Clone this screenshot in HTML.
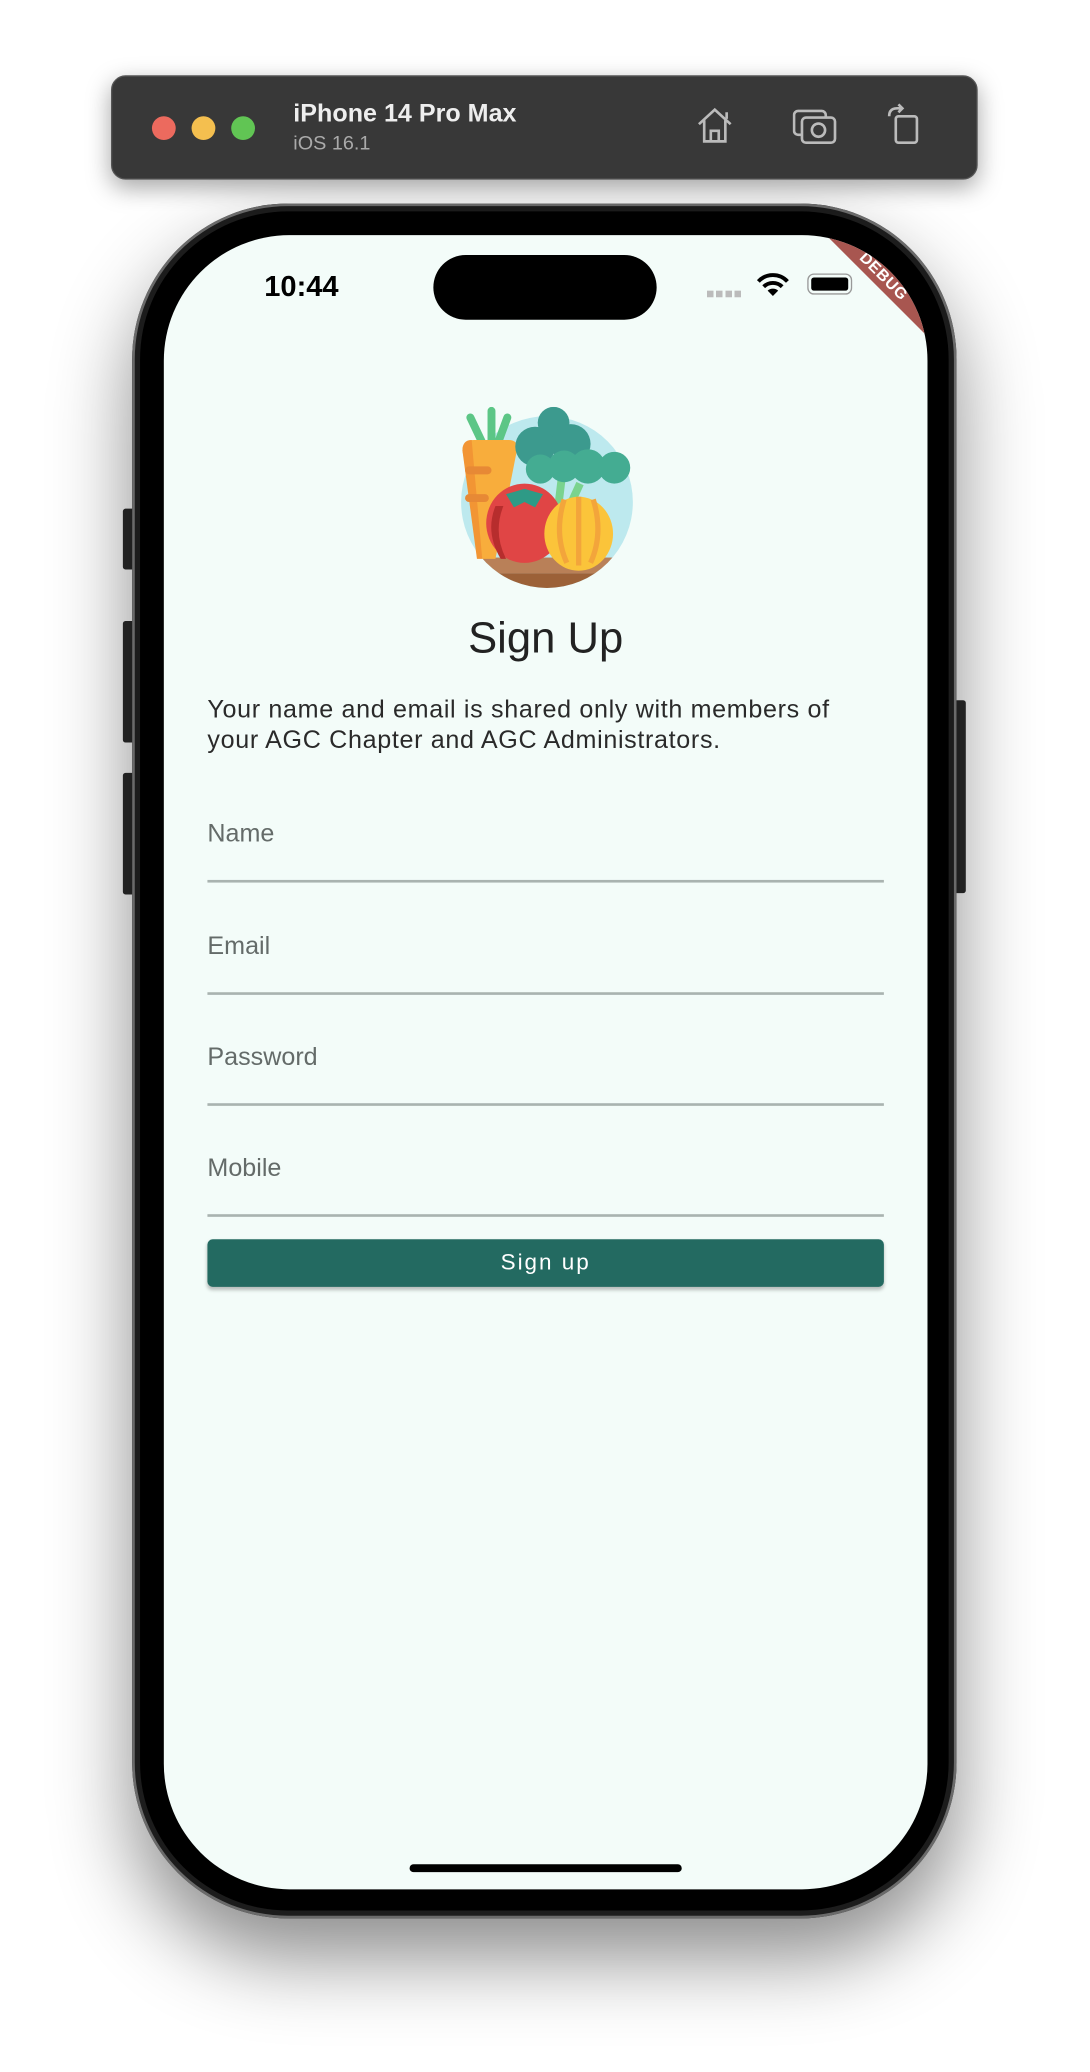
<!DOCTYPE html>
<html><head><meta charset="utf-8"><style>
html,body{margin:0;padding:0;background:#fff;width:1090px;height:2072px;overflow:hidden}
#w{position:absolute;left:0;top:0;width:825px;height:1568px;transform:scale(1.32121);transform-origin:0 0;font-family:"Liberation Sans",sans-serif}
.abs{position:absolute}
.bar{left:84px;top:57px;width:656px;height:79px;background:#383838;border-radius:11px;box-shadow:0 6px 18px rgba(0,0,0,.35);border:1px solid #555;box-sizing:border-box}
.dot{width:18px;height:18px;border-radius:50%;top:88px}
.phone{left:100px;top:154px;width:624px;height:1298px;border-radius:118px;background:#1c1c1c;box-shadow:0 30px 60px rgba(0,0,0,.45),0 0 0 2px #6a6a6a inset;}
.bezel{left:106px;top:160px;width:612px;height:1286px;border-radius:112px;background:#000}
.screen{left:124px;top:178px;width:578px;height:1252px;border-radius:95px;background:#f3fcf9;overflow:hidden}
.btn{background:#2a2a2a;border-radius:2px}
.lbl{left:33px;font-size:19px;color:#646b69}
.line{left:33px;width:512px;height:2px;background:#a9b3b0}
</style></head><body><div id="w">
<div class="abs btn" style="left:93px;top:385px;width:9px;height:46px"></div>
<div class="abs btn" style="left:93px;top:470px;width:9px;height:92px"></div>
<div class="abs btn" style="left:93px;top:585px;width:9px;height:92px"></div>
<div class="abs btn" style="left:722px;top:530px;width:9px;height:146px"></div>
<div class="abs phone"></div>
<div class="abs bezel"></div>
<div class="abs screen">
  <div class="abs" style="left:76px;top:26px;font-size:22px;font-weight:bold;color:#000">10:44</div>
  <div class="abs" style="left:204px;top:15px;width:169px;height:49px;border-radius:25px;background:#000"></div>
  <div class="abs" style="left:411px;top:42px;width:27px;height:5px;background:repeating-linear-gradient(90deg,#bbb 0 5px,transparent 5px 7px)"></div>
  <svg class="abs" style="left:448px;top:27px" width="26" height="20" viewBox="0 0 26 20"><path d="M13 19 L9 15 A6 6 0 0 1 17 15 Z" fill="#000"/><path d="M6 12 A10 10 0 0 1 20 12" stroke="#000" stroke-width="3" fill="none"/><path d="M2 8 A15 15 0 0 1 24 8" stroke="#000" stroke-width="3" fill="none"/></svg>
  <div class="abs" style="left:487px;top:29px;width:34px;height:16px;border:1.5px solid #999;border-radius:5px;box-sizing:border-box;padding:2px"><div style="background:#000;height:100%;border-radius:2px"></div></div>
  <div class="abs" style="left:475px;top:22px;width:140px;height:18px;background:#a85650;transform:rotate(45deg);color:#fff;font-size:12px;font-weight:bold;text-align:center;line-height:18px;letter-spacing:.5px">DEBUG</div>

  <svg class="abs" style="left:223px;top:130px" width="134" height="138" viewBox="0 0 134 138">
    <defs><clipPath id="c"><ellipse cx="67" cy="72" rx="65" ry="65"/></clipPath></defs>
    <ellipse cx="67" cy="72" rx="65" ry="65" fill="#bde9ee"/>
    <g clip-path="url(#c)">
      <rect x="0" y="114" width="134" height="12" fill="#b98058"/>
      <rect x="0" y="126" width="134" height="14" fill="#9c6138"/>
    </g>
    <path d="M9 8 L18 27 M25 3 L25 27 M37 8 L30 27" stroke="#5cc686" stroke-width="6" stroke-linecap="round"/>
    <path d="M3 33 Q3 25 12 25 L38 25 Q46 25 44 34 L28 115 L18 115 Z" fill="#f8ad3c"/>
    <path d="M3 33 Q3 25 10 25 L18 115 L14 115 Z" fill="#f29534"/>
    <rect x="5" y="45" width="20" height="6" rx="3" fill="#e78935"/>
    <rect x="5" y="66" width="18" height="6" rx="3" fill="#e78935"/>
    <circle cx="72" cy="12" r="12" fill="#3c9a8e"/>
    <circle cx="58" cy="30" r="15" fill="#3c9a8e"/>
    <circle cx="85" cy="28" r="15" fill="#3c9a8e"/>
    <path d="M75 80 L78 55 M82 80 L92 58" stroke="#7ad38e" stroke-width="6"/>
    <circle cx="62" cy="47" r="11" fill="#44ac92"/><circle cx="80" cy="45" r="12" fill="#44ac92"/><circle cx="98" cy="45" r="13" fill="#44ac92"/><circle cx="118" cy="46" r="12" fill="#44ac92"/>
    <ellipse cx="50" cy="88" rx="29" ry="30" fill="#e04545"/>
    <path d="M28 75 Q20 95 32 115 L36 115 Q26 95 34 75Z" fill="#b72d2d"/>
    <path d="M36 66 L50 62 L64 66 L58 76 L50 72 L42 76 Z" fill="#2e9a86"/>
    <ellipse cx="91" cy="96" rx="26" ry="28" fill="#fbc43a"/>
    <path d="M80 70 Q72 96 82 118 M91 68 L91 120 M102 70 Q110 96 100 118" stroke="#f3a53b" stroke-width="4" fill="none"/>
  </svg>

  <div class="abs" style="left:0;width:578px;top:286px;text-align:center;font-size:33px;color:#222">Sign Up</div>
  <div class="abs" style="left:33px;top:348px;width:500px;font-size:19px;line-height:23px;color:#2a2a2a;letter-spacing:.5px">Your name and email is shared only with members of your AGC Chapter and AGC Administrators.</div>

  <div class="abs lbl" style="top:443px">Name</div><div class="abs line" style="top:488px"></div>
  <div class="abs lbl" style="top:528px">Email</div><div class="abs line" style="top:573px"></div>
  <div class="abs lbl" style="top:612px">Password</div><div class="abs line" style="top:657px"></div>
  <div class="abs lbl" style="top:696px">Mobile</div><div class="abs line" style="top:741px"></div>
  <div class="abs" style="left:33px;top:760px;width:512px;height:36px;background:#236a61;border-radius:4px;box-shadow:0 2px 3px rgba(0,0,0,.25);color:#fff;text-align:center;line-height:36px;font-size:17px;letter-spacing:1.5px">Sign up</div>

  <div class="abs" style="left:186px;top:1233px;width:206px;height:6px;border-radius:3px;background:#000"></div>
</div>

<div class="abs bar"></div>
<div class="abs dot" style="left:115px;background:#ec6a5e"></div>
<div class="abs dot" style="left:145px;background:#f4bf4f"></div>
<div class="abs dot" style="left:175px;background:#61c554"></div>
<div class="abs" style="left:222px;top:76px;color:#eee;font-size:19px;font-weight:bold">iPhone 14 Pro Max</div>
<div class="abs" style="left:222px;top:100px;color:#aaa;font-size:15px">iOS 16.1</div>
<svg class="abs" style="left:526px;top:80px" width="32" height="30" viewBox="0 0 32 30" fill="none" stroke="#bbb" stroke-width="2"><path d="M3 14 L15 3 L27 14 M7 11 V27 H23 V11 M12 27 V19 H18 V27"/><path d="M24 5 V10"/></svg>
<svg class="abs" style="left:600px;top:82px" width="34" height="28" viewBox="0 0 34 28" fill="none" stroke="#bbb" stroke-width="2"><rect x="1" y="2" width="24" height="18" rx="3"/><rect x="7" y="7" width="25" height="19" rx="3" fill="#383838"/><circle cx="19.5" cy="16.5" r="5"/></svg>
<svg class="abs" style="left:670px;top:78px" width="30" height="32" viewBox="0 0 30 32" fill="none" stroke="#bbb" stroke-width="2"><rect x="8" y="10" width="16" height="20" rx="2"/><path d="M3 10 Q3 4 9 4 L12 4 M10 1 L13 4 L10 7"/></svg>
</div></body></html>
